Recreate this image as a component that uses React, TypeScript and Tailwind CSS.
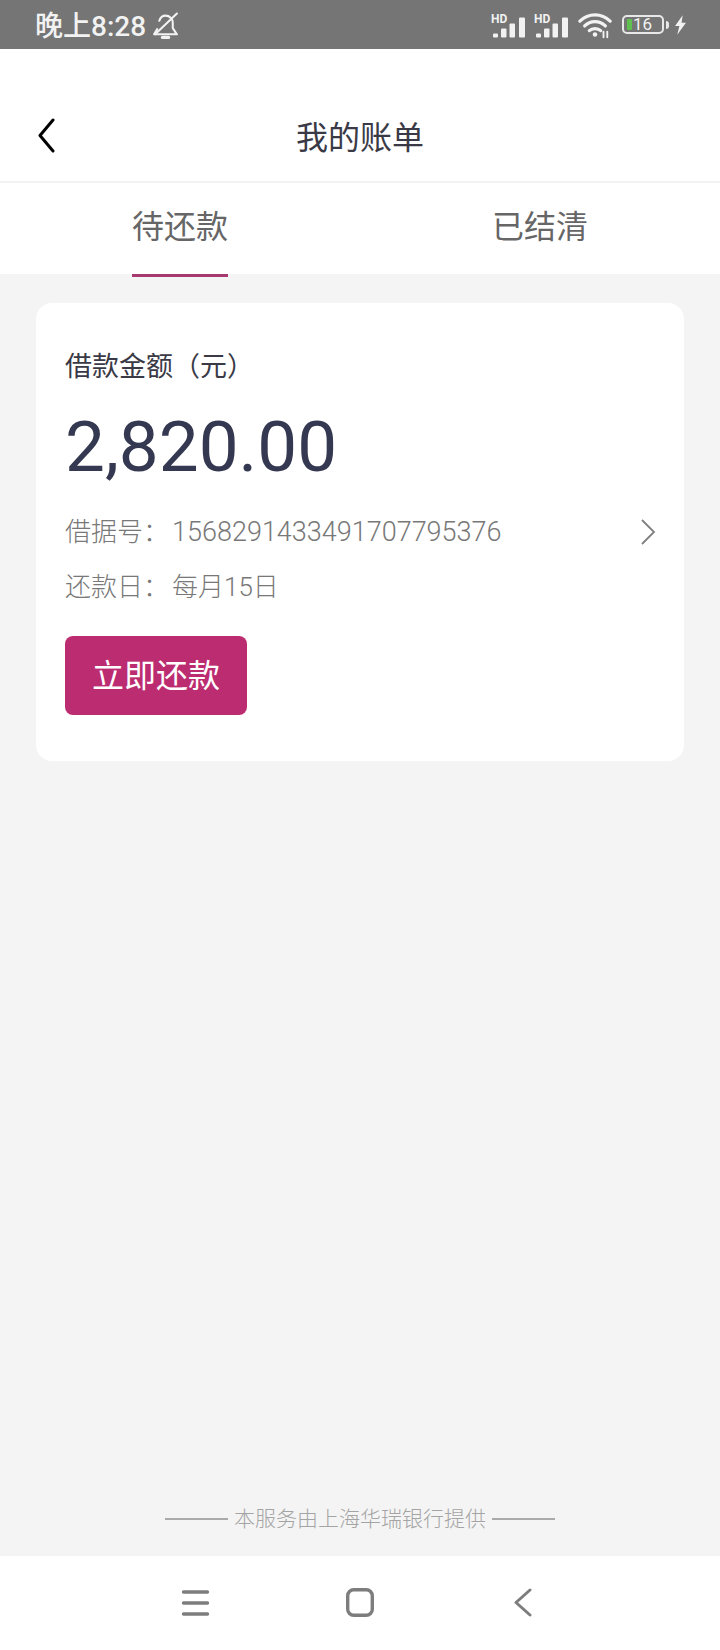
const fontStack = { fontFamily: '"Roboto", "Noto Sans CJK SC", sans-serif' };

function SignalIcon() {
  return (
    <svg width="36" height="30" viewBox="0 0 36 30" fill="#f2f2f2">
      <text x="0" y="13" fontSize="12" fontWeight="700" fontFamily="Roboto, sans-serif">HD</text>
      <rect x="2" y="23.5" width="5" height="4" rx="1" />
      <rect x="10" y="18.5" width="5.5" height="9" rx="1" />
      <rect x="18.5" y="13.5" width="5.5" height="14" rx="1" />
      <rect x="28" y="7.5" width="6" height="20" rx="1" />
    </svg>
  );
}

function StatusBar() {
  return (
    <div className="flex h-[49px] items-center justify-between bg-[#757575] pl-[35px] pr-[33px] text-[#f2f2f2]">
      <div className="flex items-center gap-[6px]">
        <span className="mt-[4px] text-[28px] font-medium leading-none">晚上8:28</span>
        <svg className="mt-[3px]" width="27" height="30" viewBox="0 0 26 28" fill="none" stroke="#f2f2f2" strokeWidth="2" strokeLinecap="round" strokeLinejoin="round">
          <path d="M7 9c1-3 3-5 6-5 4 0 7 3 7 7v5l4 6H2l3-5" />
          <path d="M10 25h6" strokeWidth="3" />
          <path d="M24 2 3 22" />
        </svg>
      </div>
      <div className="flex items-center">
        <SignalIcon />
        <div className="w-[7px]" />
        <SignalIcon />
        <svg className="ml-[8px]" width="34" height="28" viewBox="0 0 36 28" fill="none" stroke="#f2f2f2" strokeWidth="3.4" strokeLinecap="round">
          <path d="M2 10c9-9 23-9 32 0" />
          <path d="M7 15c6-6 16-6 22 0" />
          <path d="M12 20c3-3 9-3 12 0" />
          <circle cx="18" cy="24" r="2.4" fill="#f2f2f2" stroke="none" />
          <path d="M27 21v6M31 21v6" strokeWidth="2" />
        </svg>
        <div className="ml-[10px] flex h-[19px] w-[42px] items-center rounded-[5px] border-2 border-[#e8e8e8] pl-[3px]">
          <div className="h-[11px] w-[5px] rounded-[1px] bg-[#5fbf4f]" />
          <span className="ml-[1px] text-[17px] leading-none">16</span>
        </div>
        <div className="ml-[2px] h-[8px] w-[3px] rounded-r-sm bg-[#e8e8e8]" />
        <svg className="ml-[5px]" width="13" height="20" viewBox="0 0 12 18" fill="#f2f2f2">
          <path d="M8 0 1 10h4l-2 8 8-11H7l1-7z" />
        </svg>
      </div>
    </div>
  );
}

function Header() {
  return (
    <header className="relative flex h-[134px] items-end justify-center border-b-2 border-[#f3f3f3] pb-[21px]">
      <svg className="absolute left-[37px] top-[69px]" width="20" height="35" viewBox="0 0 20 35" fill="none" stroke="#000" strokeWidth="3" strokeLinecap="round" strokeLinejoin="round">
        <path d="M16 2 3 17.5 16 33" />
      </svg>
      <h1 className="text-[32px] leading-[44px] text-[#3a3a46]">我的账单</h1>
    </header>
  );
}

function Tabs() {
  return (
    <div className="flex h-[91px]">
      <div className="flex flex-1 justify-center">
        <div className="relative flex h-[94px] w-[96px] justify-center border-b-[3px] border-[#a63a70] pt-[22px] text-[32px] leading-[44px] text-[#666666]">
          待还款
        </div>
      </div>
      <div className="flex flex-1 justify-center pt-[22px] text-[32px] leading-[44px] text-[#666666]">已结清</div>
    </div>
  );
}

function BillCard() {
  return (
    <section className="flex h-[458px] flex-col rounded-[16px] bg-white pl-[29px] pr-[28px]">
      <div className="mt-[46px] text-[27px] leading-[36px] text-[#3a3a46]">借款金额（元）</div>
      <div className="mt-[21px] text-[71px] leading-[82px] text-[#343850]">2,820.00</div>
      <div className="mt-[26px] flex items-center justify-between text-[26px] font-light leading-[36px] text-[#787878]">
        <span>借据号：<span className="ml-[3px] text-[27px]">1568291433491707795376</span></span>
        <svg width="16" height="28" viewBox="0 0 16 28" fill="none" stroke="#808080" strokeWidth="1.8">
          <path d="m2 2 12 12L2 26" />
        </svg>
      </div>
      <div className="mt-[19px] text-[26px] font-light leading-[36px] text-[#787878]">还款日：<span className="ml-[3px]">每月15日</span></div>
      <button className="mt-[31px] h-[79px] w-[182px] rounded-[8px] bg-[#bc2c70] text-[32px] leading-none text-white">立即还款</button>
    </section>
  );
}

function NavBar() {
  return (
    <nav className="flex h-[94px] items-start gap-[136px] bg-white pl-[180px] pt-[31px]">
      <svg width="30" height="30" viewBox="0 0 30 30" fill="none" stroke="#7d7d7d" strokeWidth="3.4" strokeLinecap="round">
        <path d="M3.5 5h24M3.5 16h24M3.5 27h24" />
      </svg>
      <svg width="30" height="30" viewBox="0 0 30 30" fill="none" stroke="#7d7d7d" strokeWidth="3.4">
        <rect x="1.7" y="2.7" width="24.6" height="25.6" rx="6" />
      </svg>
      <svg className="ml-[1px]" width="20" height="30" viewBox="0 0 20 30" fill="none" stroke="#7d7d7d" strokeWidth="3" strokeLinecap="round" strokeLinejoin="round">
        <path d="M17 3 3 15.5 17 28" />
      </svg>
    </nav>
  );
}

export default function App() {
  return (
    <div className="flex h-[1650px] w-[720px] flex-col bg-white" style={fontStack}>
      <StatusBar />
      <Header />
      <Tabs />
      <main className="flex flex-1 flex-col bg-[#f4f4f4] px-9 pt-[29px]">
        <BillCard />
        <div className="mt-auto mb-[22px] flex items-center justify-center gap-[6px] text-[21px] font-light leading-[30px] text-[#a4a4a4]">
          <div className="h-[2px] w-[63px] bg-[#aaaaaa]" />
          <span>本服务由上海华瑞银行提供</span>
          <div className="h-[2px] w-[63px] bg-[#aaaaaa]" />
        </div>
      </main>
      <NavBar />
    </div>
  );
}
